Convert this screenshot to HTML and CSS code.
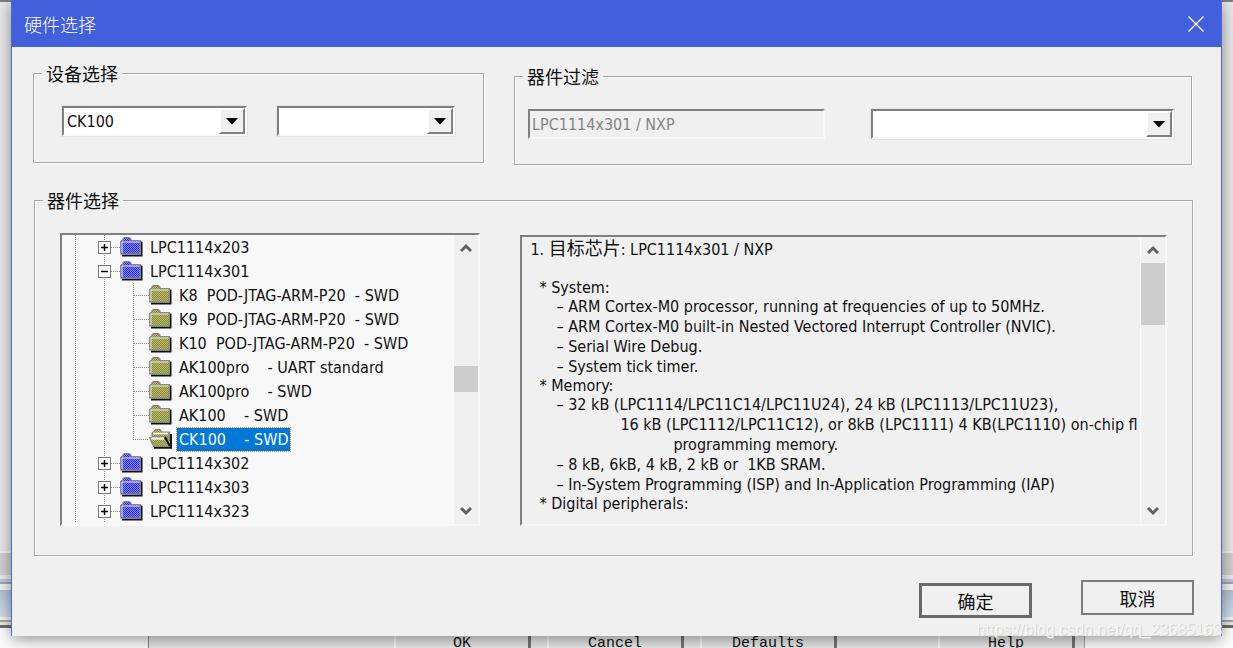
FILE: index.html
```html
<!DOCTYPE html>
<html lang="zh-CN">
<head>
  <meta charset="UTF-8" />
  <meta name="viewport" content="width=device-width, initial-scale=1" />
  <title>硬件选择</title>
  <link rel="stylesheet" href="styles.css">
</head>
<body>
  <svg class="sprite" aria-hidden="true">
    <defs>
      <pattern id="dots-blue" width="2" height="2" patternUnits="userSpaceOnUse">
        <rect width="2" height="2" fill="#2c2cf0" />
        <rect width="1" height="1" fill="#8484f6" />
        <rect x="1" y="1" width="1" height="1" fill="#8484f6" />
      </pattern>
      <pattern id="dots-olive" width="2" height="2" patternUnits="userSpaceOnUse">
        <rect width="2" height="2" fill="#8c8c2c" />
        <rect width="1" height="1" fill="#b8b878" />
        <rect x="1" y="1" width="1" height="1" fill="#b8b878" />
      </pattern>
    </defs>
    <symbol id="g-line" viewBox="0 0 29 24">
      <path d="M13.5 0V24" class="dotted" />
    </symbol>
    <symbol id="g-tee" viewBox="0 0 29 24">
      <path d="M13.5 0V24M14 12.5H29" class="dotted" />
    </symbol>
    <symbol id="g-end" viewBox="0 0 29 24">
      <path d="M13.5 0V12M13 12.5H29" class="dotted" />
    </symbol>
    <symbol id="g-plus" viewBox="0 0 29 24">
      <path d="M13.5 0V24M20 12.5H29" class="dotted" />
      <rect x="7.5" y="6.5" width="12" height="12" fill="#fff" stroke="#777" />
      <path d="M10 12.5H17M13.5 9V16" stroke="#000" stroke-width="1.5" />
    </symbol>
    <symbol id="g-minus" viewBox="0 0 29 24">
      <path d="M13.5 0V24M20 12.5H29" class="dotted" />
      <rect x="7.5" y="6.5" width="12" height="12" fill="#fff" stroke="#777" />
      <path d="M10 12.5H17" stroke="#000" stroke-width="1.5" />
    </symbol>
    <symbol id="folder" viewBox="0 0 23 20">
      <path d="M2 18.5H21.5V4.5" fill="none" stroke="#111" stroke-width="2" />
      <path d="M.7 17V4.5L3 3V1.5L4.5.7H9.5L11 2V3.5H20.3V17Z" stroke="#858585" stroke-width="1.2" />
      <path d="M2 16V5H19.5" fill="none" stroke="#e4e4ea" stroke-width="1" />
    </symbol>
    <symbol id="folder-open" viewBox="0 0 23 20">
      <path d="M5 18.8H22V5" fill="none" stroke="#111" stroke-width="2" />
      <path d="M3 8V4L5 2.5 6.5.7H11L12.5 3H20.5V12L17 8Z" stroke="#858585" stroke-width="1.2" />
      <path d="M4 4.5H19" stroke="#fff" stroke-width="1.5" />
      <path d="M.7 8.5H15.5L20.5 17.5H4.5Z" stroke="#858585" stroke-width="1.2" />
      <path d="M2 9.5H15" stroke="#fff" stroke-width="2" />
      <path d="M16 8L21 17" stroke="#111" stroke-width="2" />
    </symbol>
    <symbol id="up" viewBox="0 0 12 10">
      <path d="M1 8L6 3L11 8" fill="none" stroke="#606060" stroke-width="3" />
    </symbol>
    <symbol id="down" viewBox="0 0 12 10">
      <path d="M1 2L6 7L11 2" fill="none" stroke="#606060" stroke-width="3" />
    </symbol>
    <symbol id="drop" viewBox="0 0 12 7">
      <path d="M0 0H12L6 6.5Z" fill="#000" />
    </symbol>
  </svg>

  <div class="app">
    <div class="app-work"></div>
    <div class="app-bar"></div>
    <div class="app-edge"></div>
    <div class="app-status"></div>
    <div class="app-frame"></div>
    <div class="app-footer">
      <div class="app-buttons">
        <button type="button">OK</button>
        <button type="button">Cancel</button>
        <button type="button">Defaults</button>
        <button type="button" class="help">Help</button>
      </div>
    </div>
  </div>

  <form class="dialog">
    <header class="titlebar">
      <h1>硬件选择</h1>
      <button type="button" class="close" aria-label="关闭">
        <svg width="16" height="16" viewBox="0 0 16 16"><path d="M.5.5L15.5 15.5M15.5.5L.5 15.5" stroke="#fff" stroke-width="1.3" /></svg>
      </button>
    </header>

    <div class="content">
      <div class="top">
        <fieldset class="group device">
          <legend>设备选择</legend>
          <div class="combo">
            <select aria-label="设备">
              <option>CK100</option>
            </select>
            <span class="combo-arrow"><svg width="12" height="7"><use href="#drop" /></svg></span>
          </div>
          <div class="combo">
            <select aria-label="设备编号">
              <option></option>
            </select>
            <span class="combo-arrow"><svg width="12" height="7"><use href="#drop" /></svg></span>
          </div>
        </fieldset>

        <fieldset class="group filter">
          <legend>器件过滤</legend>
          <input type="text" class="textbox" aria-label="器件" value="LPC1114x301 / NXP" disabled />
          <div class="combo">
            <select aria-label="过滤">
              <option></option>
            </select>
            <span class="combo-arrow"><svg width="12" height="7"><use href="#drop" /></svg></span>
          </div>
        </fieldset>
      </div>

      <fieldset class="group parts">
        <legend>器件选择</legend>

        <div class="panel tree">
          <ul class="rows">
            <li><svg class="guide"><use href="#g-line" /></svg><svg class="guide"><use href="#g-plus" /></svg><svg class="icon blue"><use href="#folder" /></svg><span>LPC1114x203</span></li>
            <li><svg class="guide"><use href="#g-line" /></svg><svg class="guide"><use href="#g-minus" /></svg><svg class="icon blue"><use href="#folder" /></svg><span>LPC1114x301</span></li>
            <li><svg class="guide"><use href="#g-line" /></svg><svg class="guide"><use href="#g-line" /></svg><svg class="guide"><use href="#g-tee" /></svg><svg class="icon olive"><use href="#folder" /></svg><span>K8  POD-JTAG-ARM-P20  - SWD</span></li>
            <li><svg class="guide"><use href="#g-line" /></svg><svg class="guide"><use href="#g-line" /></svg><svg class="guide"><use href="#g-tee" /></svg><svg class="icon olive"><use href="#folder" /></svg><span>K9  POD-JTAG-ARM-P20  - SWD</span></li>
            <li><svg class="guide"><use href="#g-line" /></svg><svg class="guide"><use href="#g-line" /></svg><svg class="guide"><use href="#g-tee" /></svg><svg class="icon olive"><use href="#folder" /></svg><span>K10  POD-JTAG-ARM-P20  - SWD</span></li>
            <li><svg class="guide"><use href="#g-line" /></svg><svg class="guide"><use href="#g-line" /></svg><svg class="guide"><use href="#g-tee" /></svg><svg class="icon olive"><use href="#folder" /></svg><span>AK100pro    - UART standard</span></li>
            <li><svg class="guide"><use href="#g-line" /></svg><svg class="guide"><use href="#g-line" /></svg><svg class="guide"><use href="#g-tee" /></svg><svg class="icon olive"><use href="#folder" /></svg><span>AK100pro    - SWD</span></li>
            <li><svg class="guide"><use href="#g-line" /></svg><svg class="guide"><use href="#g-line" /></svg><svg class="guide"><use href="#g-tee" /></svg><svg class="icon olive"><use href="#folder" /></svg><span>AK100    - SWD</span></li>
            <li><svg class="guide"><use href="#g-line" /></svg><svg class="guide"><use href="#g-line" /></svg><svg class="guide"><use href="#g-end" /></svg><svg class="icon olive"><use href="#folder-open" /></svg><span class="selected">CK100    - SWD</span></li>
            <li><svg class="guide"><use href="#g-line" /></svg><svg class="guide"><use href="#g-plus" /></svg><svg class="icon blue"><use href="#folder" /></svg><span>LPC1114x302</span></li>
            <li><svg class="guide"><use href="#g-line" /></svg><svg class="guide"><use href="#g-plus" /></svg><svg class="icon blue"><use href="#folder" /></svg><span>LPC1114x303</span></li>
            <li><svg class="guide"><use href="#g-line" /></svg><svg class="guide"><use href="#g-plus" /></svg><svg class="icon blue"><use href="#folder" /></svg><span>LPC1114x323</span></li>
          </ul>
          <div class="scrollbar">
            <button type="button" aria-label="向上"><svg width="12" height="10"><use href="#up" /></svg></button>
            <div class="track tree-track"><div class="thumb"></div></div>
            <button type="button" aria-label="向下"><svg width="12" height="10"><use href="#down" /></svg></button>
          </div>
        </div>

        <div class="panel detail">
          <div class="text">
            <p class="chip">1. <b>目标芯片</b>: LPC1114x301 / NXP</p>
            <p>* System:</p>
            <ul>
              <li>– ARM Cortex-M0 processor, running at frequencies of up to 50MHz.</li>
              <li>– ARM Cortex-M0 built-in Nested Vectored Interrupt Controller (NVIC).</li>
              <li>– Serial Wire Debug.</li>
              <li>– System tick timer.</li>
            </ul>
            <p>* Memory:</p>
            <ul>
              <li>– 32 kB (LPC1114/LPC11C14/LPC11U24), 24 kB (LPC1113/LPC11U23),</li>
              <li class="more">16 kB (LPC1112/LPC11C12), or 8kB (LPC1111) 4 KB(LPC1110) on-chip fl</li>
              <li class="more-2">programming memory.</li>
              <li>– 8 kB, 6kB, 4 kB, 2 kB or  1KB SRAM.</li>
              <li>– In-System Programming (ISP) and In-Application Programming (IAP)</li>
            </ul>
            <p>* Digital peripherals:</p>
          </div>
          <div class="scrollbar">
            <button type="button" aria-label="向上"><svg width="12" height="10"><use href="#up" /></svg></button>
            <div class="track detail-track"><div class="thumb"></div></div>
            <button type="button" aria-label="向下"><svg width="12" height="10"><use href="#down" /></svg></button>
          </div>
        </div>
      </fieldset>

      <div class="actions">
        <button type="submit" class="btn ok">确定</button>
        <button type="button" class="btn cancel">取消</button>
      </div>
    </div>
  </form>
  <div class="watermark">https://blog.csdn.net/qq_23685163</div>
</body>
</html>
```
FILE: styles.css
```css
* {
  box-sizing: border-box;
}
body {
  margin: 0;
  min-height: 100vh;
  display: grid;
  position: relative;
  overflow: hidden;
  color: #111;
  font-family: "DejaVu Sans Condensed", "Noto Sans CJK SC", sans-serif;
  font-size: 16px;
}
button, input, select {
  font: inherit;
  color: inherit;
  margin: 0;
}
p, ul, h1 {
  margin: 0;
  padding: 0;
}
li {
  list-style: none;
}
svg {
  display: block;
}
.sprite {
  position: absolute;
  width: 0;
  height: 0;
}
.dotted {
  fill: none;
  stroke: #8a8a8a;
  stroke-dasharray: 1 1;
}

/* window behind the dialog */
.app {
  grid-area: 1 / 1;
  display: flex;
  flex-direction: column;
  background: #f4f4f4;
  border-top: 2px solid #808080;
}
.app-work {
  flex: 1;
  background: #ebebeb;
  border-bottom: 2px solid #f6f6f6;
}
.app-bar {
  height: 22px;
  background: #d4d4d4;
}
.app-edge {
  height: 15px;
  border-top: 4px solid #efefef;
  background: linear-gradient(#b9cbf0 3px, #aaa 3px, #aaa 5px, #f6f6f6 5px);
}
.app-status {
  height: 27px;
  background: linear-gradient(#b4c4d6, #d3e1f0);
}
.app-frame {
  height: 11px;
  background: linear-gradient(#f6f6f6 3px, #aaa 3px, #aaa 5px, #eee 5px, #eee 8px, #6e6e6e 8px);
}
.app-footer {
  height: 20px;
  padding: 0 12%;
  overflow: hidden;
  background: #fff;
}
.app-buttons {
  display: grid;
  grid-template-columns: 137px 137px 137px 69px 137px;
  justify-content: end;
  gap: 16px;
  padding-right: 9px;
  background: #eaeaea;
  border-left: 1px solid #888;
  border-right: 1px solid #aaa;
}
.app-buttons button {
  height: 30px;
  padding: 2px 0 0;
  border: none;
  border-left: 2px solid #fff;
  border-right: 3px solid #777;
  background: none;
  font-family: "Liberation Mono", monospace;
  font-size: 15px;
  line-height: 18px;
}
.app-buttons .help {
  grid-column: 5;
}

.dialog {
  grid-area: 1 / 1;
  align-self: start;
  position: relative;
  margin: 0 11px;
  background: #f0f0f0;
  border: 1px solid #4f68d6;
  border-width: 0 1px;
  box-shadow: 0 3px 16px rgba(0, 0, 0, 0.45);
}
.titlebar {
  display: flex;
  align-items: center;
  justify-content: space-between;
  height: 47px;
  padding: 0 17px 0 12px;
  background: #4260dc;
  color: #fff;
}
h1 {
  font-family: "Noto Sans CJK SC", sans-serif;
  font-size: 18px;
  font-weight: 300;
  line-height: 22px;
}
.close {
  padding: 0;
  border: none;
  background: none;
}
.content {
  padding: 14px 27px 18px 21px;
}

/* etched group boxes */
.group {
  display: grid;
  min-width: 0;
  margin: 0;
  border: 1px solid #a8a8a8;
  box-shadow: 1px 1px 0 #fff, inset 1px 1px 0 #fff;
}
legend {
  margin-left: -20px;
  padding: 0 4px;
  background: #f0f0f0;
  font-family: "Noto Sans CJK SC", sans-serif;
  font-size: 18px;
  line-height: 24px;
}
.top {
  display: grid;
  grid-template-columns: 451fr 678fr;
  gap: 30px;
  margin-right: 2px;
}
.device {
  grid-template-columns: 186fr 178fr;
  gap: 30px;
  margin-bottom: 2px;
  padding: 21px 28px 26px;
}
.filter {
  grid-template-columns: 297fr 302fr;
  gap: 46px;
  margin-top: 3px;
  padding: 21px 17px 25px 13px;
}
.filter legend {
  margin-left: -5px;
}
.panel, .textbox, .combo {
  border: 2px solid;
  border-color: #808080 #f8f8f8 #f8f8f8 #808080;
}
.combo {
  display: grid;
  height: 30px;
  background: #fff;
  box-shadow: 0 0 0 1px #e4e4e4;
}
.combo select {
  grid-area: 1 / 1;
  width: 100%;
  padding: 0 26px 0 3px;
  border: none;
  border-radius: 0;
  background: none;
  appearance: none;
  outline: none;
}
.combo-arrow {
  grid-area: 1 / 1;
  justify-self: end;
  display: flex;
  align-items: center;
  justify-content: center;
  width: 26px;
  background: #f0f0f0;
  border: 2px solid;
  border-color: #fff #808080 #808080 #fff;
  pointer-events: none;
}
.textbox {
  width: 100%;
  height: 30px;
  padding: 0 2px;
  border-radius: 0;
  background: #f0f0f0;
  color: #858585;
}

.parts {
  grid-template-columns: 420fr 646fr;
  gap: 40px;
  align-items: end;
  margin: 23px 1px 0;
  padding: 21px 25px 29px;
}
.parts legend {
  margin-left: -17px;
}
.panel {
  display: flex;
  min-width: 0;
  overflow: hidden;
}
.tree {
  height: 293px;
  background: #f8f8f8;
}
.rows {
  flex: 1;
  min-width: 0;
}
.rows li {
  display: flex;
  align-items: center;
  height: 24px;
  white-space: pre;
}
.rows span {
  margin-left: 5px;
  padding: 0 2px;
  line-height: 23px;
}
.rows .selected {
  background: #0078d7;
  color: #fff;
  outline: 1px dotted #e08a3c;
}
.guide {
  flex: none;
  width: 29px;
  height: 24px;
}
.icon {
  flex: none;
  width: 23px;
  height: 20px;
}
.blue {
  fill: url(#dots-blue);
}
.olive {
  fill: url(#dots-olive);
}
.scrollbar {
  flex: none;
  display: flex;
  flex-direction: column;
  width: 25px;
  background: #f0f0f0;
  border-left: 1px solid #fafafa;
}
.scrollbar button {
  display: flex;
  align-items: center;
  justify-content: center;
  height: 26px;
  padding: 0;
  border: none;
  background: none;
}
.track {
  flex: 1;
}
.thumb {
  background: #cdcdcd;
}
.tree-track {
  padding-top: 105px;
}
.tree-track .thumb {
  height: 26px;
}
.detail-track .thumb {
  height: 62px;
}

.detail {
  height: 291px;
}
.text {
  flex: 1;
  min-width: 0;
  padding: 1px 0 0 8px;
  overflow: hidden;
  line-height: 19px;
}
.text p, .text li {
  white-space: pre;
}
.text p {
  padding-left: 9px;
}
.text .chip {
  margin-bottom: 18px;
  padding-left: 0;
  line-height: 20px;
}
.chip b {
  font-family: "Noto Sans CJK SC", sans-serif;
  font-size: 18px;
  font-weight: 400;
  line-height: 1;
}
.text ul {
  padding-left: 26px;
}
.text li + li {
  margin-top: 1px;
}
.text .more {
  padding-left: 64px;
}
.text .more-2 {
  padding-left: 117px;
}

.actions {
  display: flex;
  justify-content: flex-end;
  gap: 49px;
  height: 38px;
  margin-top: 24px;
}
.btn {
  width: 113px;
  height: 35px;
  padding: 0;
  background: #f0f0f0;
  font-family: "Noto Sans CJK SC", sans-serif;
  font-size: 18px;
  line-height: 22px;
}
.ok {
  align-self: flex-end;
  border: 3px solid #696969;
}
.cancel {
  border: 2px solid #7c7c7c;
}

.watermark {
  position: absolute;
  right: 11px;
  bottom: 9px;
  color: #f4f4f4;
  font: 16px/18px "Liberation Sans", sans-serif;
  text-shadow: 1px 1px 1px #ccc;
}
```
